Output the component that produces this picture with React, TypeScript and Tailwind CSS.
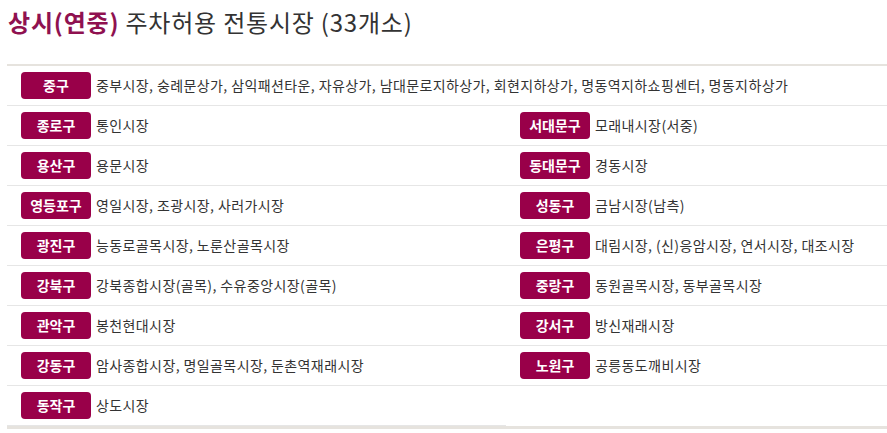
import React from 'react';

type Row = { gu: string; markets: string };

const left: Row[] = [
  { gu: '종로구', markets: '통인시장' },
  { gu: '용산구', markets: '용문시장' },
  { gu: '영등포구', markets: '영일시장, 조광시장, 사러가시장' },
  { gu: '광진구', markets: '능동로골목시장, 노룬산골목시장' },
  { gu: '강북구', markets: '강북종합시장(골목), 수유중앙시장(골목)' },
  { gu: '관악구', markets: '봉천현대시장' },
  { gu: '강동구', markets: '암사종합시장, 명일골목시장, 둔촌역재래시장' },
  { gu: '동작구', markets: '상도시장' },
];

const right: Row[] = [
  { gu: '서대문구', markets: '모래내시장(서중)' },
  { gu: '동대문구', markets: '경동시장' },
  { gu: '성동구', markets: '금남시장(남측)' },
  { gu: '은평구', markets: '대림시장, (신)응암시장, 연서시장, 대조시장' },
  { gu: '중랑구', markets: '동원골목시장, 동부골목시장' },
  { gu: '강서구', markets: '방신재래시장' },
  { gu: '노원구', markets: '공릉동도깨비시장' },
];

const Badge = ({ children }: { children: React.ReactNode }) => (
  <span className="w-[70px] h-[27px] shrink-0 flex items-center justify-center rounded-[4px] bg-[#990049] text-white text-[14px] font-bold">
    {children}
  </span>
);

const Cell = ({ row }: { row: Row }) => (
  <div className="h-10 flex items-center pl-[14px] border-b border-[#e6e6e6]">
    <Badge>{row.gu}</Badge>
    <span className="ml-[5px] text-[14px] tracking-[0.4px] text-[#333] whitespace-nowrap">{row.markets}</span>
  </div>
);

export default function App() {
  return (
    <div
      className="w-[887px] h-[433px] bg-white overflow-hidden"
      style={{ fontFamily: '"Noto Sans CJK KR", "Noto Sans", sans-serif' }}
    >
      <h2 className="pl-2 pt-[4px] h-[64px] text-[24px] leading-[36px] tracking-[0.8px] text-[#333] font-normal">
        <span className="text-[#8f1150] font-semibold">상시(연중)</span> 주차허용 전통시장 (33개소)
      </h2>
      <div className="ml-[7px] border-t-2 border-b-[3px] border-[#e6e3de]">
        <div className="h-10 flex items-center pl-[14px] border-b border-[#e6e6e6]">
          <Badge>중구</Badge>
          <span className="ml-[5px] text-[14px] tracking-[0.4px] text-[#333] whitespace-nowrap">
            중부시장, 숭례문상가, 삼익패션타운, 자유상가, 남대문로지하상가, 회현지하상가, 명동역지하쇼핑센터, 명동지하상가
          </span>
        </div>
        <div className="grid grid-cols-[499px_1fr]">
          <div>
            {left.map((r) => (
              <Cell key={r.gu} row={r} />
            ))}
          </div>
          <div>
            {right.map((r) => (
              <Cell key={r.gu} row={r} />
            ))}
          </div>
        </div>
      </div>
    </div>
  );
}
